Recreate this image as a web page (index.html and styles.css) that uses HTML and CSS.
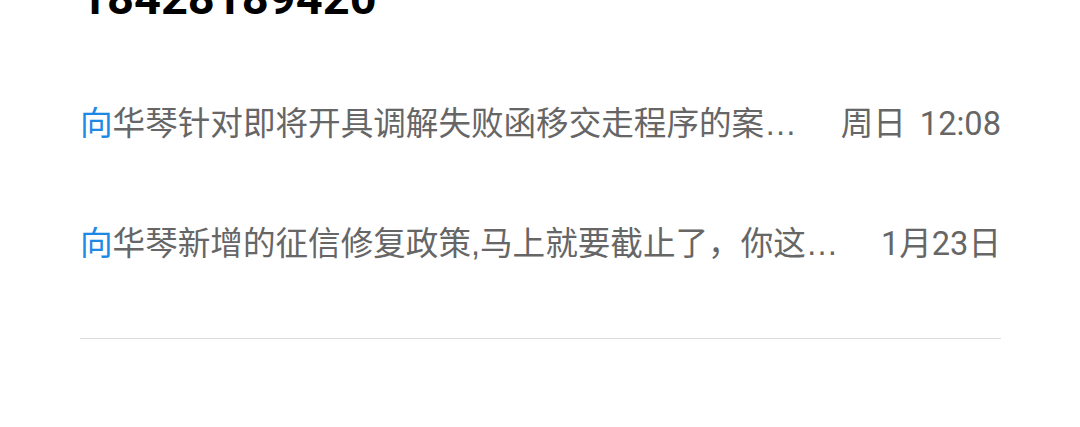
FILE: index.html
```html
<!DOCTYPE html>
<html lang="zh-CN">
<head>
<meta charset="utf-8">
<title>消息</title>
<link rel="stylesheet" href="styles.css">
</head>
<body>
<div class="page">
  <div class="phone">18428189420</div>
  <ul class="list">
    <li class="row">
      <span class="title"><span class="name">向</span>华琴针对即将开具调解失败函移交走程序的案件进行了跟进处理</span>
      <span class="time"><span class="day">周日</span>12:08</span>
    </li>
    <li class="row">
      <span class="title"><span class="name">向</span>华琴新增的征信修复政策,马上就要截止了，你这边需要尽快处理</span>
      <span class="time">1月23日</span>
    </li>
  </ul>
  <div class="divider"></div>
</div>
</body>
</html>
```

FILE: styles.css
```css
html, body {
  margin: 0;
  padding: 0;
  background: #ffffff;
}
body {
  font-family: Roboto, "Noto Sans CJK SC", sans-serif;
  overflow: hidden;
}
.page {
  padding: 0 79px 0 80px;
}
.phone {
  margin-top: -30px;
  font-size: 47px;
  line-height: 56px;
  font-weight: 700;
  color: #000;
  margin-bottom: 38px;
}
.list {
  list-style: none;
  margin: 0;
  padding: 0;
}
.row {
  height: 120px;
  display: flex;
  align-items: center;
  font-size: 32.6px;
  line-height: 46px;
  color: #666666;
}
.title {
  flex: 1;
  min-width: 0;
  white-space: nowrap;
  overflow: hidden;
  text-overflow: ellipsis;
  margin-right: 24px;
  font-family: "Liberation Sans", "Noto Sans CJK SC", sans-serif;
}
.name {
  color: #1e88e5;
}
.time {
  flex: none;
  white-space: nowrap;
}
.day {
  margin-right: 14px;
}
.divider {
  margin-top: 34px;
  height: 1px;
  background: #dddddd;
}
```
